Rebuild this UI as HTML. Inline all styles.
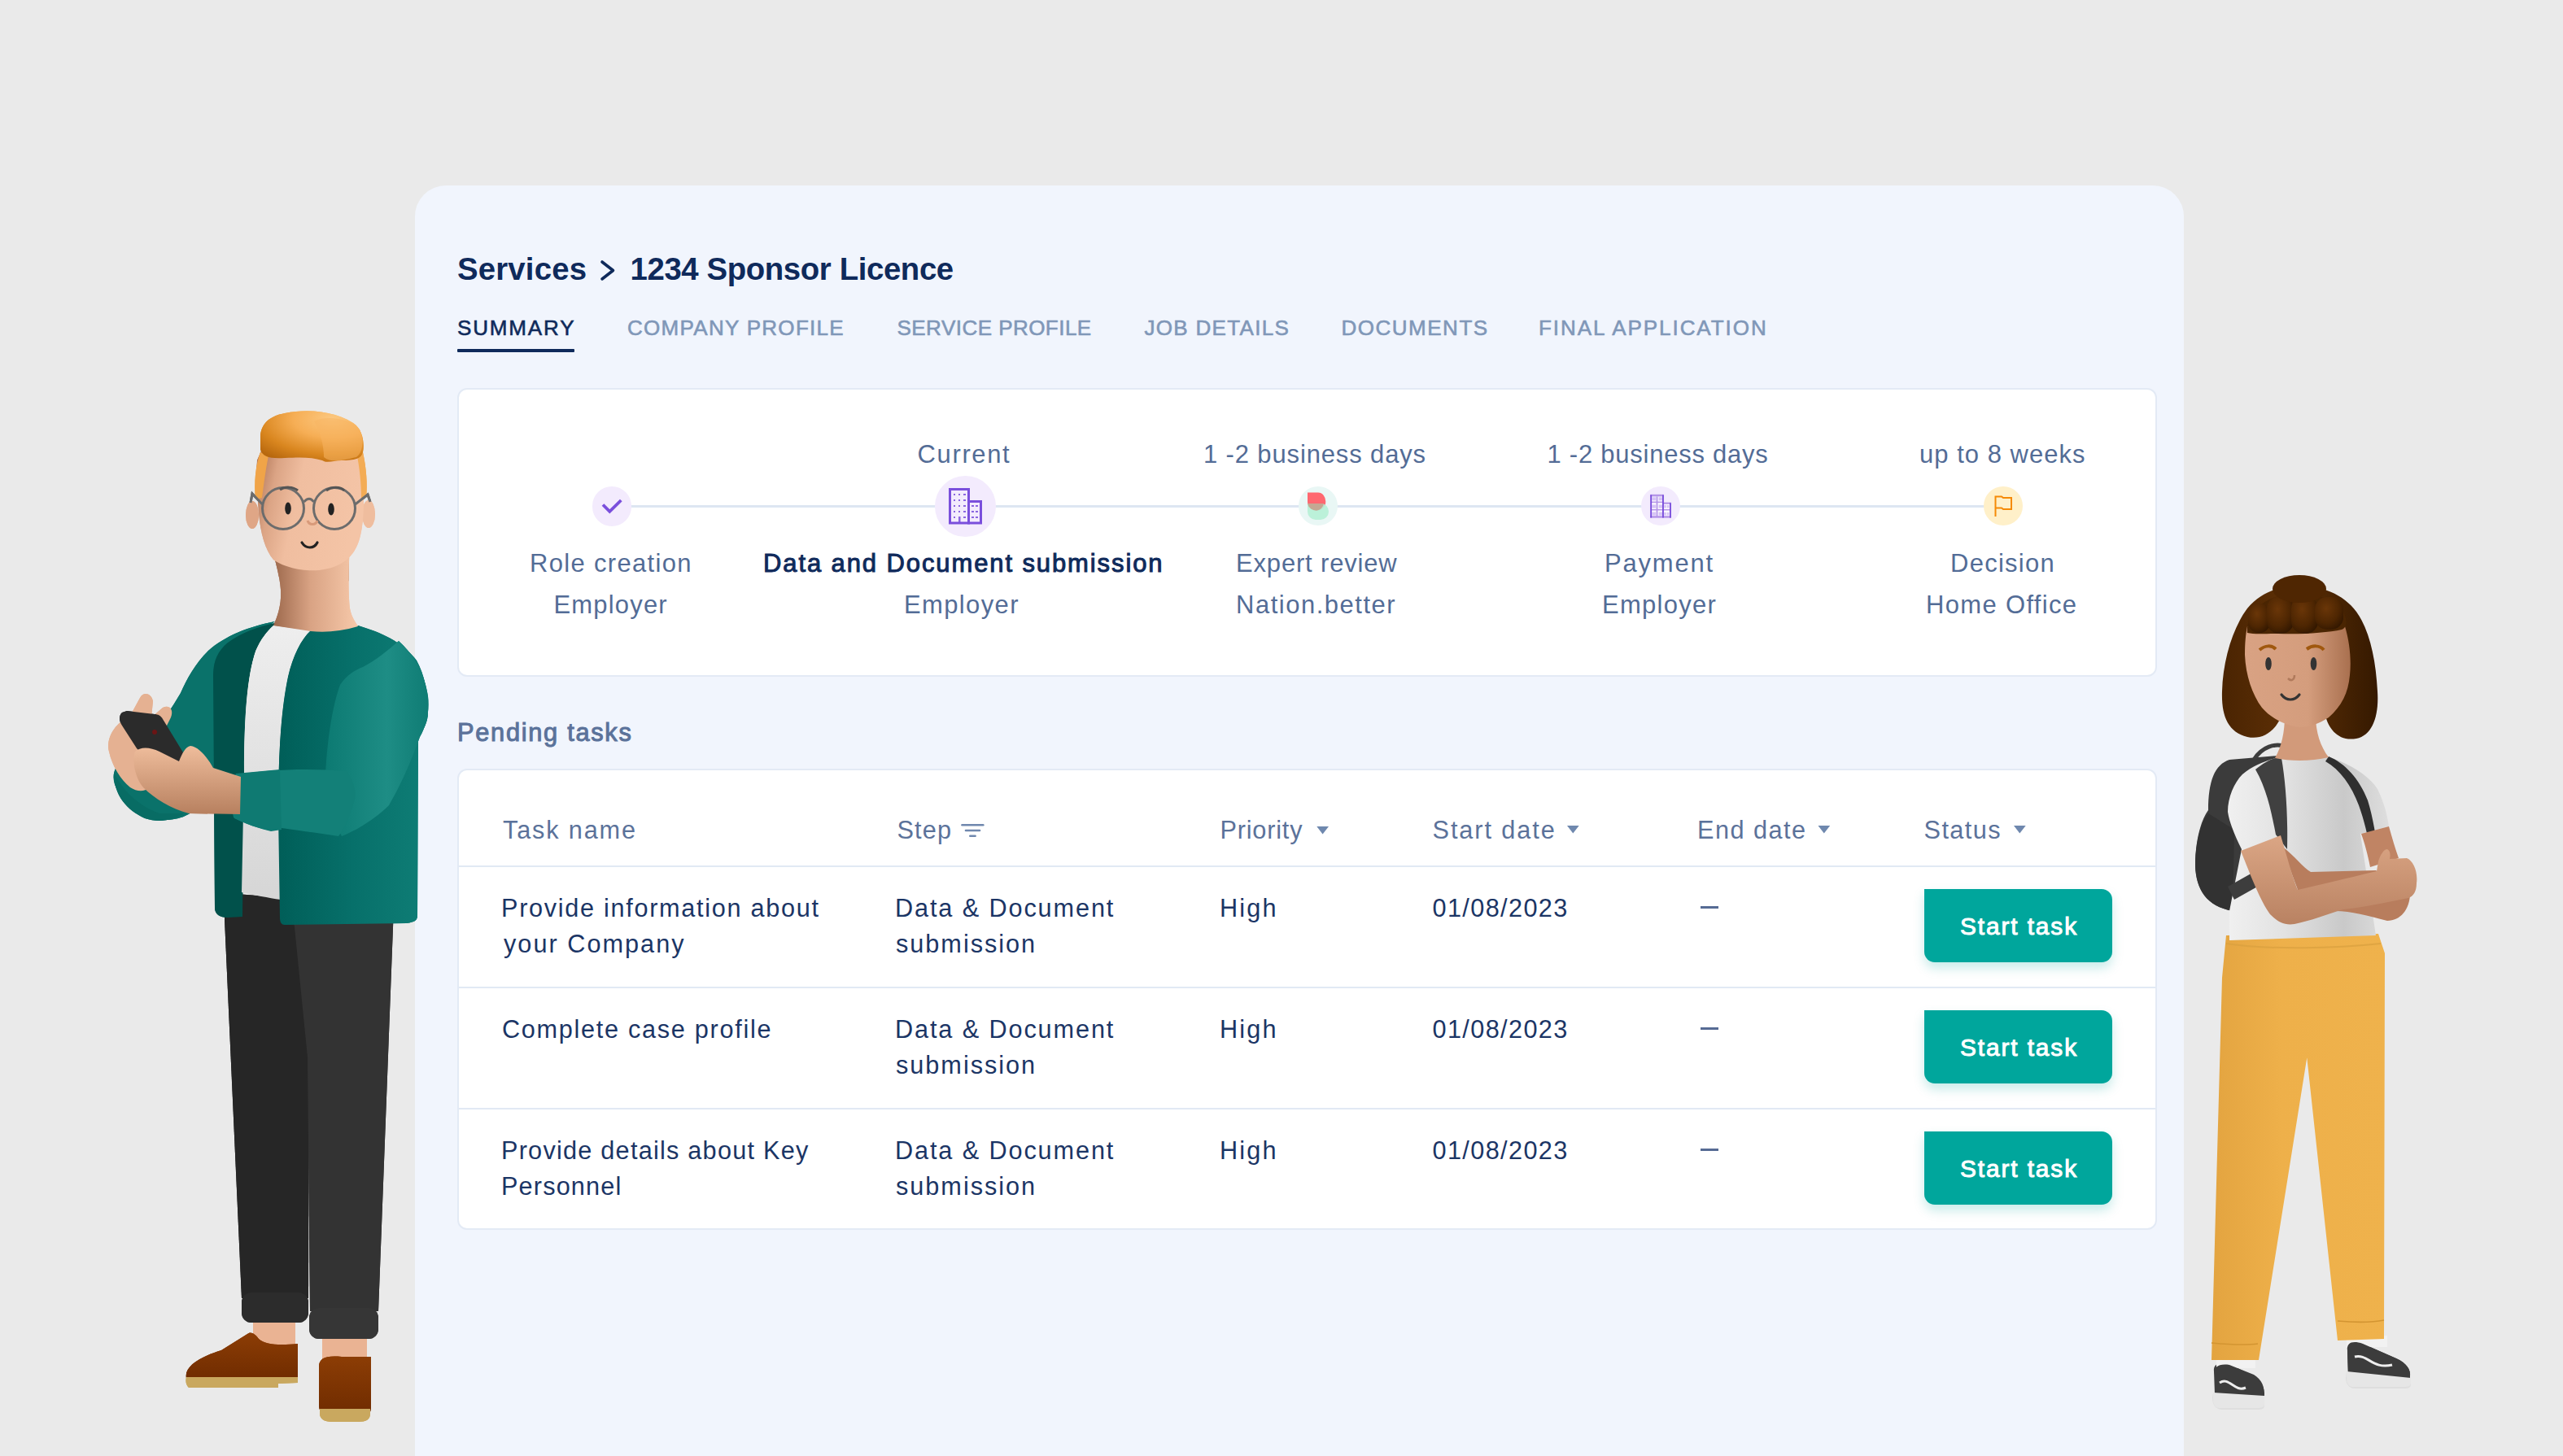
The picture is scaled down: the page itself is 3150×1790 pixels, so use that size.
<!DOCTYPE html>
<html><head><meta charset="utf-8"><title>Sponsor Licence</title><style>
*{margin:0;padding:0;box-sizing:border-box}
html,body{width:3150px;height:1790px;overflow:hidden}
body{position:relative;font-family:"Liberation Sans",sans-serif;background:#eaeaea}
.t{position:absolute;white-space:nowrap;line-height:1}

.card{position:absolute;left:510px;top:228px;width:2174px;height:1700px;background:#f1f5fd;border-radius:38px}
.box{position:absolute;background:#fff;border:2px solid #e3eaf5;border-radius:12px}
.hl{position:absolute;background:#e1e9f4}
.circ{position:absolute;border-radius:50%}
.btn{position:absolute;left:2365px;width:231px;height:89.5px;background:#00a69c;border-radius:0 13px 13px 13px;box-shadow:0 7px 14px rgba(0,166,156,0.22)}
.dash{position:absolute;left:2089.5px;width:22.5px;height:3px;background:#566b94}
.ic{position:absolute;overflow:visible}
</style></head><body>
<div class="card"></div>
<svg class="ic" style="left:0;top:0" width="3150" height="1790" viewBox="0 0 3150 1790">
  <polyline points="740,322 753.5,332.5 740,343" fill="none" stroke="#0f2a5b" stroke-width="3.6" stroke-linecap="round" stroke-linejoin="round"/>
</svg>
<div style="position:absolute;left:562px;top:428.8px;width:144px;height:3.8px;background:#0f2a5b;border-radius:1px"></div>
<div class="box" style="left:562.3px;top:477.2px;width:2088.7px;height:354.5px"></div>
<div class="box" style="left:562.3px;top:944.8px;width:2088.7px;height:567.4px"></div>
<div style="position:absolute;left:760px;top:620.5px;width:1700px;height:3.4px;background:#dde6f2"></div>
<div class="circ" style="left:727.8px;top:598.3px;width:48.6px;height:48.6px;background:#f3ebfd"></div>
<div class="circ" style="left:1149px;top:585px;width:74.5px;height:74.5px;background:#f3ebfd"></div>
<div class="circ" style="left:1596px;top:598px;width:48px;height:48px;background:#e9f7f5"></div>
<div class="circ" style="left:2017px;top:598px;width:48px;height:48px;background:#f3ebfd"></div>
<div class="circ" style="left:2438px;top:598px;width:48px;height:48px;background:#fff0c9"></div>
<svg class="ic" style="left:0;top:0" width="3150" height="1790" viewBox="0 0 3150 1790">
  <!-- check -->
  <polyline points="741,620.5 749.3,628.8 763.3,615" fill="none" stroke="#7a4fdc" stroke-width="3.8" stroke-linecap="butt" stroke-linejoin="miter"/>
  <!-- big building -->
  <g fill="none" stroke="#7a4fdc" stroke-width="3">
    <rect x="1167.5" y="601.5" width="23" height="41.5"/>
    <rect x="1190.5" y="616.5" width="15" height="26.5"/>
  </g>
  <g fill="#7a4fdc" opacity="0.85">
    <rect x="1172" y="607" width="2" height="2"/><rect x="1178" y="607" width="2" height="2"/><rect x="1184" y="607" width="3" height="2"/>
    <rect x="1172" y="614" width="2" height="2"/><rect x="1178" y="614" width="2" height="2"/><rect x="1184" y="614" width="3" height="2"/>
    <rect x="1172" y="621" width="2" height="2"/><rect x="1178" y="621" width="2" height="2"/><rect x="1184" y="621" width="3" height="2"/>
    <rect x="1172" y="628" width="2" height="2"/><rect x="1178" y="628" width="2" height="2"/><rect x="1184" y="628" width="3" height="2"/>
    <rect x="1172" y="635" width="2" height="2"/><rect x="1178" y="635" width="2.5" height="8"/><rect x="1184" y="635" width="3" height="2"/>
    <rect x="1194" y="621" width="3" height="2"/><rect x="1199" y="621" width="3" height="2"/>
    <rect x="1194" y="628" width="3" height="2"/><rect x="1199" y="628" width="3" height="2"/>
    <rect x="1194" y="635" width="3" height="2"/><rect x="1199" y="635" width="3" height="2"/>
  </g>
  <!-- expert review blob -->
  <path d="M1607,605.5 H1620 A9.3,11 0 0 1 1629.3,616.5 A11,11 0 0 1 1618,627.7 A11,11 0 0 1 1607,616.7 Z" fill="#ff6870"/>
  <path d="M1607,619 H1624 A9,10 0 0 1 1633,629 A10,10 0 0 1 1623,639 H1617 A10,10 0 0 1 1607,629 Z" fill="#b6efd6" opacity="0.9"/>
  <path d="M1607,619 H1627 A11,11 0 0 1 1618,627.7 A11,11 0 0 1 1607,619 Z" fill="#c4a893"/>
  <!-- payment building -->
  <rect x="2029.5" y="610" width="14" height="25" fill="#fbf8ff"/>
  <rect x="2044.5" y="619.5" width="8" height="15.5" fill="#fbf8ff"/>
  <g fill="#d6c4f5">
    <rect x="2030.3" y="611.3" width="4.8" height="4"/><rect x="2038.6" y="611.3" width="4.4" height="4"/>
    <rect x="2030.3" y="620.6" width="4.8" height="4"/><rect x="2038.6" y="620.6" width="4.4" height="4"/>
    <rect x="2030.3" y="629.6" width="4.8" height="4"/><rect x="2038.6" y="629.6" width="4.4" height="4"/>
    <rect x="2045.2" y="621" width="2.6" height="3.4"/><rect x="2048.8" y="621" width="2.6" height="3.4"/>
    <rect x="2045.2" y="630" width="2.6" height="3.4"/><rect x="2048.8" y="630" width="2.6" height="3.4"/>
  </g>
  <g fill="#b596e8">
    <rect x="2035.6" y="610.5" width="1.8" height="25"/>
    <rect x="2029.5" y="616.6" width="14" height="1.5"/><rect x="2029.5" y="626" width="24" height="1.5"/>
    <rect x="2028.2" y="607.8" width="16.6" height="2.6"/>
    <rect x="2028.2" y="634.2" width="25.6" height="2.5"/>
    <rect x="2044" y="617.6" width="9.8" height="2.2"/>
  </g>
  <g fill="#7a4fdc">
    <rect x="2028.2" y="608.5" width="1.9" height="28"/>
    <rect x="2043" y="608.5" width="1.9" height="28"/>
    <rect x="2052" y="618.3" width="1.9" height="18.3"/>
  </g>
  <!-- flag -->
  <path d="M2452.5,635 V610.5 H2460 L2462,612 H2472 V626 H2462 L2460,624.5 H2452.5" fill="none" stroke="#f58a07" stroke-width="2" stroke-linejoin="miter"/>
  <!-- filter icon -->
  <g stroke="#7088ae" stroke-width="2.6" stroke-linecap="round">
    <line x1="1182.5" y1="1014.3" x2="1208.3" y2="1014.3"/>
    <line x1="1187" y1="1021" x2="1204" y2="1021"/>
    <line x1="1192.3" y1="1027.8" x2="1198.6" y2="1027.8"/>
  </g>
  <g fill="#6f88ae">
    <path d="M1618.3,1016 H1633 L1625.6,1025.5 Z"/>
    <path d="M1926,1015 H1940.7 L1933.3,1024.5 Z"/>
    <path d="M2234.5,1015 H2249.2 L2241.8,1024.5 Z"/>
    <path d="M2475,1015 H2489.7 L2482.3,1024.5 Z"/>
  </g>
</svg>
<div class="hl" style="left:564px;top:1063.5px;width:2085px;height:2px"></div>
<div class="hl" style="left:564px;top:1212.6px;width:2085px;height:2px"></div>
<div class="hl" style="left:564px;top:1361.7px;width:2085px;height:2px"></div>
<div class="dash" style="top:1114.3px"></div>
<div class="dash" style="top:1263.3px"></div>
<div class="dash" style="top:1412.3px"></div>
<div class="btn" style="top:1093.2px"></div>
<div class="btn" style="top:1242.2px"></div>
<div class="btn" style="top:1391.2px"></div>

<div class="t" id="bc1" style="left:562.00px;top:311.61px;font-size:38.37px;letter-spacing:0.171px;font-weight:700;color:#0f2a5b">Services</div>
<div class="t" id="bc2" style="left:774.50px;top:311.61px;font-size:38.37px;letter-spacing:-0.389px;font-weight:700;color:#0f2a5b">1234 Sponsor Licence</div>
<div class="t" id="tab1" style="left:562.00px;top:389.81px;font-size:26.02px;letter-spacing:1.833px;font-weight:400;color:#0f2a5b;-webkit-text-stroke:0.60px #0f2a5b">SUMMARY</div>
<div class="t" id="tab2" style="left:771.00px;top:389.81px;font-size:26.02px;letter-spacing:1.286px;font-weight:400;color:#8097b8;-webkit-text-stroke:0.60px #8097b8">COMPANY PROFILE</div>
<div class="t" id="tab3" style="left:1102.50px;top:389.81px;font-size:26.02px;letter-spacing:0.457px;font-weight:400;color:#8097b8;-webkit-text-stroke:0.60px #8097b8">SERVICE PROFILE</div>
<div class="t" id="tab4" style="left:1406.50px;top:389.81px;font-size:26.02px;letter-spacing:1.300px;font-weight:400;color:#8097b8;-webkit-text-stroke:0.60px #8097b8">JOB DETAILS</div>
<div class="t" id="tab5" style="left:1648.50px;top:389.81px;font-size:26.02px;letter-spacing:1.500px;font-weight:400;color:#8097b8;-webkit-text-stroke:0.60px #8097b8">DOCUMENTS</div>
<div class="t" id="tab6" style="left:1891.00px;top:389.81px;font-size:26.02px;letter-spacing:1.938px;font-weight:400;color:#8097b8;-webkit-text-stroke:0.60px #8097b8">FINAL APPLICATION</div>
<div class="t" id="st1" style="left:1127.50px;top:543.60px;font-size:30.96px;letter-spacing:1.667px;font-weight:400;color:#536c96">Current</div>
<div class="t" id="st2" style="left:1479.00px;top:543.60px;font-size:30.96px;letter-spacing:0.882px;font-weight:400;color:#536c96">1 -2 business days</div>
<div class="t" id="st3" style="left:1901.50px;top:543.60px;font-size:30.96px;letter-spacing:0.776px;font-weight:400;color:#536c96">1 -2 business days</div>
<div class="t" id="st4" style="left:2359.00px;top:543.60px;font-size:30.96px;letter-spacing:1.033px;font-weight:400;color:#536c96">up to 8 weeks</div>
<div class="t" id="sr1" style="left:651.00px;top:677.60px;font-size:30.96px;letter-spacing:1.350px;font-weight:400;color:#536c96">Role creation</div>
<div class="t" id="sr2" style="left:938.00px;top:677.60px;font-size:30.96px;letter-spacing:1.919px;font-weight:400;color:#0f2a5b;-webkit-text-stroke:1.00px #0f2a5b">Data and Document submission</div>
<div class="t" id="sr3" style="left:1519.00px;top:677.60px;font-size:30.96px;letter-spacing:0.850px;font-weight:400;color:#536c96">Expert review</div>
<div class="t" id="sr4" style="left:1972.00px;top:677.60px;font-size:30.96px;letter-spacing:1.833px;font-weight:400;color:#536c96">Payment</div>
<div class="t" id="sr5" style="left:2397.00px;top:677.60px;font-size:30.96px;letter-spacing:1.286px;font-weight:400;color:#536c96">Decision</div>
<div class="t" id="ss1" style="left:680.50px;top:729.31px;font-size:30.96px;letter-spacing:1.200px;font-weight:400;color:#536c96">Employer</div>
<div class="t" id="ss2" style="left:1111.00px;top:729.31px;font-size:30.96px;letter-spacing:1.400px;font-weight:400;color:#536c96">Employer</div>
<div class="t" id="ss3" style="left:1519.00px;top:729.31px;font-size:30.96px;letter-spacing:1.533px;font-weight:400;color:#536c96">Nation.better</div>
<div class="t" id="ss4" style="left:1969.00px;top:729.31px;font-size:30.96px;letter-spacing:1.286px;font-weight:400;color:#536c96">Employer</div>
<div class="t" id="ss5" style="left:2367.00px;top:729.31px;font-size:30.96px;letter-spacing:1.360px;font-weight:400;color:#536c96">Home Office</div>
<div class="t" id="pt" style="left:562.00px;top:886.41px;font-size:30.81px;letter-spacing:1.700px;font-weight:400;color:#5b729a;-webkit-text-stroke:1.00px #5b729a">Pending tasks</div>
<div class="t" id="h1" style="left:618.00px;top:1004.50px;font-size:30.67px;letter-spacing:1.850px;font-weight:400;color:#5b729a">Task name</div>
<div class="t" id="h2" style="left:1102.50px;top:1004.50px;font-size:30.67px;letter-spacing:1.133px;font-weight:400;color:#5b729a">Step</div>
<div class="t" id="h3" style="left:1499.50px;top:1004.50px;font-size:30.67px;letter-spacing:0.800px;font-weight:400;color:#5b729a">Priority</div>
<div class="t" id="h4" style="left:1760.50px;top:1004.50px;font-size:30.67px;letter-spacing:1.933px;font-weight:400;color:#5b729a">Start date</div>
<div class="t" id="h5" style="left:2086.00px;top:1004.50px;font-size:30.67px;letter-spacing:1.457px;font-weight:400;color:#5b729a">End date</div>
<div class="t" id="h6" style="left:2364.50px;top:1004.50px;font-size:30.67px;letter-spacing:1.440px;font-weight:400;color:#5b729a">Status</div>
<div class="t" id="r0a" style="left:616.00px;top:1101.00px;font-size:30.67px;letter-spacing:1.692px;font-weight:400;color:#1b3565">Provide information about</div>
<div class="t" id="r0b" style="left:619.00px;top:1145.00px;font-size:30.67px;letter-spacing:2.018px;font-weight:400;color:#1b3565">your Company</div>
<div class="t" id="r0c" style="left:1100.00px;top:1101.00px;font-size:30.67px;letter-spacing:1.886px;font-weight:400;color:#1b3565">Data &amp; Document</div>
<div class="t" id="r0d" style="left:1101.00px;top:1145.00px;font-size:30.67px;letter-spacing:1.978px;font-weight:400;color:#1b3565">submission</div>
<div class="t" id="r0e" style="left:1499.00px;top:1101.00px;font-size:30.67px;letter-spacing:2.133px;font-weight:400;color:#1b3565">High</div>
<div class="t" id="r0f" style="left:1760.50px;top:1101.00px;font-size:30.67px;letter-spacing:1.378px;font-weight:400;color:#1b3565">01/08/2023</div>
<div class="t" id="r0g" style="left:2409.00px;top:1124.01px;font-size:29.80px;letter-spacing:1.911px;font-weight:400;color:#ffffff;-webkit-text-stroke:1.00px #ffffff">Start task</div>
<div class="t" id="r1a" style="left:617.00px;top:1250.00px;font-size:30.67px;letter-spacing:1.700px;font-weight:400;color:#1b3565">Complete case profile</div>
<div class="t" id="r1c" style="left:1100.00px;top:1250.00px;font-size:30.67px;letter-spacing:1.886px;font-weight:400;color:#1b3565">Data &amp; Document</div>
<div class="t" id="r1d" style="left:1101.00px;top:1294.00px;font-size:30.67px;letter-spacing:1.978px;font-weight:400;color:#1b3565">submission</div>
<div class="t" id="r1e" style="left:1499.00px;top:1250.00px;font-size:30.67px;letter-spacing:2.133px;font-weight:400;color:#1b3565">High</div>
<div class="t" id="r1f" style="left:1760.50px;top:1250.00px;font-size:30.67px;letter-spacing:1.378px;font-weight:400;color:#1b3565">01/08/2023</div>
<div class="t" id="r1g" style="left:2409.00px;top:1273.01px;font-size:29.80px;letter-spacing:1.911px;font-weight:400;color:#ffffff;-webkit-text-stroke:1.00px #ffffff">Start task</div>
<div class="t" id="r2a" style="left:616.00px;top:1399.00px;font-size:30.67px;letter-spacing:1.233px;font-weight:400;color:#1b3565">Provide details about Key</div>
<div class="t" id="r2b" style="left:616.00px;top:1443.00px;font-size:30.67px;letter-spacing:1.150px;font-weight:400;color:#1b3565">Personnel</div>
<div class="t" id="r2c" style="left:1100.00px;top:1399.00px;font-size:30.67px;letter-spacing:1.886px;font-weight:400;color:#1b3565">Data &amp; Document</div>
<div class="t" id="r2d" style="left:1101.00px;top:1443.00px;font-size:30.67px;letter-spacing:1.978px;font-weight:400;color:#1b3565">submission</div>
<div class="t" id="r2e" style="left:1499.00px;top:1399.00px;font-size:30.67px;letter-spacing:2.133px;font-weight:400;color:#1b3565">High</div>
<div class="t" id="r2f" style="left:1760.50px;top:1399.00px;font-size:30.67px;letter-spacing:1.378px;font-weight:400;color:#1b3565">01/08/2023</div>
<div class="t" id="r2g" style="left:2409.00px;top:1422.01px;font-size:29.80px;letter-spacing:1.911px;font-weight:400;color:#ffffff;-webkit-text-stroke:1.00px #ffffff">Start task</div>
<svg style="position:absolute;left:0;top:0" width="3150" height="1790" viewBox="0 0 3150 1790">
<defs>
  <linearGradient id="gPants" x1="0" y1="0" x2="1" y2="0">
    <stop offset="0" stop-color="#262626"/><stop offset="0.5" stop-color="#2e2e2e"/><stop offset="1" stop-color="#3a3a3a"/>
  </linearGradient>
  <linearGradient id="gNeck" x1="0" y1="0" x2="1" y2="0">
    <stop offset="0" stop-color="#9a664a"/><stop offset="0.45" stop-color="#d9a384"/><stop offset="1" stop-color="#f7c9aa"/>
  </linearGradient>
  <linearGradient id="gFace" x1="0" y1="0" x2="1" y2="0.25">
    <stop offset="0" stop-color="#a86c4e"/><stop offset="0.22" stop-color="#dba485"/><stop offset="0.45" stop-color="#f0bea0"/><stop offset="1" stop-color="#f4c4a6"/>
  </linearGradient>
  <radialGradient id="gHair" cx="0.7" cy="0.15" r="0.95">
    <stop offset="0" stop-color="#fcc880"/><stop offset="0.4" stop-color="#f6ae55"/><stop offset="0.75" stop-color="#d9861f"/><stop offset="1" stop-color="#b8680e"/>
  </radialGradient>
  <linearGradient id="gJR" x1="0" y1="0" x2="1" y2="0">
    <stop offset="0" stop-color="#005e58"/><stop offset="0.5" stop-color="#07706a"/><stop offset="1" stop-color="#0f7e76"/>
  </linearGradient>
  <linearGradient id="gArmR" x1="0" y1="0" x2="1" y2="0">
    <stop offset="0" stop-color="#0c7a72"/><stop offset="0.6" stop-color="#1e8d85"/><stop offset="1" stop-color="#0f7c74"/>
  </linearGradient>
  <linearGradient id="gShirt" x1="0" y1="0" x2="0" y2="1">
    <stop offset="0" stop-color="#eeeeee"/><stop offset="1" stop-color="#d6d6d6"/>
  </linearGradient>
  <linearGradient id="gShoe" x1="0" y1="0" x2="0" y2="1">
    <stop offset="0" stop-color="#8c3d05"/><stop offset="1" stop-color="#6e2b00"/>
  </linearGradient>
  <linearGradient id="gHand" x1="0" y1="0" x2="0" y2="1">
    <stop offset="0" stop-color="#efbd9c"/><stop offset="1" stop-color="#b7805f"/>
  </linearGradient>
  <linearGradient id="gYP" x1="0" y1="0" x2="1" y2="0">
    <stop offset="0" stop-color="#e3a440"/><stop offset="0.4" stop-color="#eeb04a"/><stop offset="1" stop-color="#efb24c"/>
  </linearGradient>
  <linearGradient id="gWHair" x1="0" y1="0" x2="1" y2="0">
    <stop offset="0" stop-color="#4a2402"/><stop offset="0.45" stop-color="#5e3006"/><stop offset="1" stop-color="#351900"/>
  </linearGradient>
  <linearGradient id="gWFace" x1="0" y1="0" x2="1" y2="0">
    <stop offset="0" stop-color="#d9a283"/><stop offset="0.6" stop-color="#d49d7d"/><stop offset="1" stop-color="#a9704f"/>
  </linearGradient>
  <linearGradient id="gTee" x1="0" y1="0" x2="1" y2="0">
    <stop offset="0" stop-color="#f0f0f0"/><stop offset="0.35" stop-color="#e2e2e2"/><stop offset="0.72" stop-color="#c9c9c9"/><stop offset="1" stop-color="#dedede"/>
  </linearGradient>
  <linearGradient id="gArmW" x1="0" y1="0" x2="0" y2="1">
    <stop offset="0" stop-color="#dba685"/><stop offset="1" stop-color="#b98262"/>
  </linearGradient>
  <radialGradient id="gBang" cx="0.4" cy="0.35" r="0.75">
    <stop offset="0" stop-color="#6a3608"/><stop offset="0.6" stop-color="#4e2602"/><stop offset="1" stop-color="#2e1500"/>
  </radialGradient>
</defs>

<!-- ============ LEFT MAN ============ -->
<g id="man">
  <!-- ankles -->
  <path d="M311,1618 H363 V1660 H311 Z" fill="#eab393"/>
  <path d="M396,1638 H451 V1676 H396 Z" fill="#eab393"/>
  <!-- pants -->
  <path d="M277,1098 L356,1104 L380,1140 L379,1596 L297,1596 L276,1130 Z" fill="#262626"/>
  <path d="M356,1104 L484,1112 L483,1140 L465,1612 L381,1612 L378,1300 L362,1140 Z" fill="#333333"/>
  <rect x="297" y="1589" width="82" height="37" rx="12" fill="#2c2c2c"/>
  <rect x="380" y="1608" width="85" height="38" rx="12" fill="#363636"/>
  <!-- left shoe -->
  <path d="M229,1694 C226,1680 246,1668 272,1660 L304,1640 C308,1636 314,1640 318,1646 C326,1654 346,1654 366,1652 L366,1699 L229,1698 Z" fill="url(#gShoe)"/>
  <path d="M229,1693 H366 V1700 L342,1701 V1706 H232 C228,1702 228,1697 229,1693 Z" fill="#c9a85f"/>
  <!-- right shoe -->
  <path d="M392,1680 C392,1670 400,1666 420,1668 L456,1668 L456,1730 C456,1738 452,1742 440,1742 H408 C398,1742 392,1736 392,1728 Z" fill="url(#gShoe)"/>
  <path d="M393,1732 H455 V1738 C455,1745 450,1748 440,1748 H408 C398,1748 393,1744 393,1738 Z" fill="#c9a85f"/>

  <!-- left sleeve (image left) -->
  <path d="M338,764 C306,770 276,782 256,800 C240,816 230,834 222,852 C200,890 176,918 150,936 C138,944 136,960 146,974 C158,992 178,1006 204,1008 C226,1008 246,996 262,972 L270,860 L300,790 Z" fill="#0a726a"/>
  <!-- left panel dark -->
  <path d="M338,766 C318,770 296,778 280,790 C268,800 262,812 262,830 L264,1116 C264,1124 270,1128 280,1128 L298,1127 L300,950 C300,880 304,830 314,800 C320,786 328,775 338,768 Z" fill="#01514b"/>
  <!-- white shirt -->
  <path d="M336,769 L382,775 C370,786 360,806 354,832 C346,870 342,920 342,980 L345,1106 C330,1104 312,1100 297,1097 L300,950 C300,880 304,830 314,802 C320,788 328,776 336,769 Z" fill="url(#gShirt)"/>
  <!-- right panel -->
  <path d="M382,775 L440,769 C470,778 496,790 512,812 C522,830 526,852 526,876 C526,888 520,898 514,906 L513,1126 C513,1132 508,1134 500,1135 L350,1137 C346,1137 344,1134 344,1128 L342,1000 C342,920 346,870 354,832 C360,806 370,786 382,775 Z" fill="url(#gJR)"/>
  <!-- right upper arm -->
  <path d="M490,788 C508,804 522,828 526,856 C528,876 524,892 516,906 C506,934 494,962 478,990 C462,1006 440,1020 420,1028 L400,990 C398,950 404,880 418,842 C426,830 436,824 446,820 C462,812 476,800 490,788 Z" fill="url(#gArmR)"/>
  <!-- forearm -->
  <path d="M292,952 C330,946 380,944 426,948 C434,960 438,972 436,982 C430,1004 424,1018 416,1028 C390,1024 360,1020 340,1017 L332,1021 C316,1018 300,1012 288,1006 C284,990 284,966 292,952 Z" fill="#138078"/>
  <path d="M290,951 L344,946 L346,1020 L333,1022 C316,1018 300,1012 287,1005 C283,988 283,964 290,951 Z" fill="#0f7a72"/>

  <!-- back hand (behind phone) -->
  <path d="M134,924 C130,908 140,890 160,880 L172,858 C176,850 186,852 188,862 L186,882 L200,870 C208,866 214,872 210,882 L196,910 L190,960 C186,972 172,976 160,968 C148,958 138,942 134,924 Z" fill="#e5b192"/>
  <!-- phone -->
  <path d="M150,876 C146,880 146,886 150,892 L168,920 C170,923 174,924 178,924 L222,940 C228,942 230,936 228,930 L200,884 C198,880 194,878 190,878 L156,874 Z" fill="#2b2b2b"/>
  <circle cx="190" cy="900" r="3" fill="#6a1515"/>
  <!-- front hand -->
  <path d="M166,924 C172,918 184,918 196,924 L220,936 C224,926 228,918 234,917 C244,918 254,930 262,944 L296,955 L295,1001 L232,1000 C210,994 190,982 176,968 C166,956 162,936 166,924 Z" fill="url(#gHand)"/>
  <!-- cuff on left sleeve under hand -->
  <path d="M140,950 C150,970 168,990 196,1000 L226,1000 C214,1008 196,1012 178,1006 C156,996 140,978 140,950 Z" fill="#086c64"/>

  <!-- neck -->
  <path d="M334,672 L430,672 C428,700 428,730 430,748 C432,758 436,764 440,770 C420,776 400,778 382,776 L336,769 C342,756 346,742 345,725 C344,708 338,690 334,672 Z" fill="url(#gNeck)"/>
  <!-- ears -->
  <ellipse cx="310" cy="633" rx="8" ry="17" fill="#dfa686"/>
  <ellipse cx="453" cy="632" rx="8" ry="17" fill="#efbd9e"/>
  <!-- face -->
  <path d="M324,548 L440,548 C450,600 448,640 442,662 C436,684 420,698 392,701 C370,703 346,696 336,688 C326,676 320,656 318,630 C316,604 315,584 316,566 Z" fill="url(#gFace)"/>
  <path d="M341,694 C352,700 372,704 392,702 C410,700 422,694 429,686 L429,714 C418,722 404,726 388,726 C368,726 352,718 342,708 Z" fill="#a8704f" opacity="0.45"/>
  <!-- side hair -->
  <path d="M320,556 L330,560 C326,580 324,598 322,612 L314,614 C312,594 314,572 320,556 Z" fill="#f0a448"/>
  <path d="M438,556 L446,556 C450,574 452,596 450,612 L444,612 C444,596 442,574 438,556 Z" fill="#f3ac55"/>
  <!-- hair top -->
  <path d="M320,538 C320,524 328,512 350,508 C380,502 412,506 434,520 C446,528 448,544 446,556 C444,564 436,566 420,566 C410,566 402,570 396,566 C384,562 370,562 350,563 C332,564 322,562 320,552 Z" fill="url(#gHair)"/>
  <path d="M386,518 C400,510 430,514 442,528 C448,542 446,556 438,562 C420,566 408,570 398,562 C398,548 394,532 386,518 Z" fill="#f7b462" opacity="0.55"/>
  <!-- glasses -->
  <g fill="none" stroke="#6c6c6c" stroke-width="3">
    <circle cx="348" cy="625" r="25.5"/>
    <circle cx="411" cy="625" r="25.5"/>
    <path d="M373.5,617 C378,612 382,612 385.5,617"/>
    <path d="M322.5,620 L310,607 L308,618"/>
    <path d="M436.5,620 L452,608 L455,617"/>
  </g>
  <ellipse cx="354" cy="625" rx="3.8" ry="7.5" fill="#222"/>
  <ellipse cx="407" cy="626" rx="3.8" ry="7.5" fill="#222"/>
  <path d="M344,602 C350,598 360,598 366,603" stroke="#555" stroke-width="3" fill="none"/>
  <path d="M401,603 C408,598 418,598 423,603" stroke="#555" stroke-width="3" fill="none"/>
  <path d="M378,640 C380,646 388,646 390,640" stroke="#d89a7a" stroke-width="3" fill="none"/>
  <path d="M371,667 C376,675 386,675 390,667" stroke="#222" stroke-width="3.2" fill="none" stroke-linecap="round"/>
</g>

<!-- ============ RIGHT WOMAN ============ -->
<g id="woman">
  <!-- shoes -->
  <rect x="2724" y="1668" width="48" height="14" fill="#f2f2f2"/>
  <rect x="2884" y="1642" width="50" height="14" fill="#f2f2f2"/>
  <path d="M2720,1712 L2783,1722 V1728 C2783,1732 2780,1733 2774,1733 H2730 C2722,1732 2719,1726 2719,1718 Z" fill="#dedede"/>
  <path d="M2721,1686 C2720,1678 2726,1674 2738,1676 L2766,1690 C2778,1696 2784,1706 2783,1716 L2783,1722 L2722,1714 Z" fill="#3e3e3e"/>
  <path d="M2884,1686 L2963,1696 V1702 C2963,1706 2960,1707 2954,1707 H2894 C2886,1707 2883,1700 2883,1694 Z" fill="#dedede"/>
  <path d="M2885,1660 C2884,1650 2892,1648 2904,1652 L2945,1670 C2958,1676 2963,1684 2962,1692 V1696 L2886,1688 Z" fill="#3e3e3e"/>
  <path d="M2726,1696 C2736,1690 2744,1706 2756,1704" stroke="#eee" stroke-width="3" fill="none"/>
  <path d="M2890,1668 C2906,1662 2914,1680 2936,1676" stroke="#eee" stroke-width="3" fill="none"/>
  <!-- pants -->
  <path d="M277,1098 L356,1104 L380,1140 L379,1596 L297,1596 L276,1130 Z" fill="#262626"/>
  <path d="M356,1104 L484,1112 L483,1140 L465,1612 L381,1612 L378,1300 L362,1140 Z" fill="#333333"/>
  <rect x="297" y="1589" width="82" height="37" rx="12" fill="#2c2c2c"/>
  <rect x="380" y="1608" width="85" height="38" rx="12" fill="#363636"/>
  <!-- left shoe -->
  <path d="M229,1694 C226,1680 246,1668 272,1660 L304,1640 C308,1636 314,1640 318,1646 C326,1654 346,1654 366,1652 L366,1699 L229,1698 Z" fill="url(#gShoe)"/>
  <path d="M229,1693 H366 V1700 L342,1701 V1706 H232 C228,1702 228,1697 229,1693 Z" fill="#c9a85f"/>
  <!-- right shoe -->
  <path d="M392,1680 C392,1670 400,1666 420,1668 L456,1668 L456,1730 C456,1738 452,1742 440,1742 H408 C398,1742 392,1736 392,1728 Z" fill="url(#gShoe)"/>
  <path d="M393,1732 H455 V1738 C455,1745 450,1748 440,1748 H408 C398,1748 393,1744 393,1738 Z" fill="#c9a85f"/>

  <!-- left sleeve (image left) -->
  <path d="M338,764 C306,770 276,782 256,800 C240,816 230,834 222,852 C200,890 176,918 150,936 C138,944 136,960 146,974 C158,992 178,1006 204,1008 C226,1008 246,996 262,972 L270,860 L300,790 Z" fill="#0a726a"/>
  <!-- left panel dark -->
  <path d="M338,766 C318,770 296,778 280,790 C268,800 262,812 262,830 L264,1116 C264,1124 270,1128 280,1128 L298,1127 L300,950 C300,880 304,830 314,800 C320,786 328,775 338,768 Z" fill="#01514b"/>
  <!-- white shirt -->
  <path d="M336,769 L382,775 C370,786 360,806 354,832 C346,870 342,920 342,980 L345,1106 C330,1104 312,1100 297,1097 L300,950 C300,880 304,830 314,802 C320,788 328,776 336,769 Z" fill="url(#gShirt)"/>
  <!-- right panel -->
  <path d="M382,775 L440,769 C470,778 496,790 512,812 C522,830 526,852 526,876 C526,888 520,898 514,906 L513,1126 C513,1132 508,1134 500,1135 L350,1137 C346,1137 344,1134 344,1128 L342,1000 C342,920 346,870 354,832 C360,806 370,786 382,775 Z" fill="url(#gJR)"/>
  <!-- right upper arm -->
  <path d="M490,788 C508,804 522,828 526,856 C528,876 524,892 516,906 C506,934 494,962 478,990 C462,1006 440,1020 420,1028 L400,990 C398,950 404,880 418,842 C426,830 436,824 446,820 C462,812 476,800 490,788 Z" fill="url(#gArmR)"/>
  <!-- forearm -->
  <path d="M292,952 C330,946 380,944 426,948 C434,960 438,972 436,982 C430,1004 424,1018 416,1028 C390,1024 360,1020 340,1017 L332,1021 C316,1018 300,1012 288,1006 C284,990 284,966 292,952 Z" fill="#138078"/>
  <path d="M290,951 L344,946 L346,1020 L333,1022 C316,1018 300,1012 287,1005 C283,988 283,964 290,951 Z" fill="#0f7a72"/>

  <!-- back hand (behind phone) -->
  <path d="M134,924 C130,908 140,890 160,880 L172,858 C176,850 186,852 188,862 L186,882 L200,870 C208,866 214,872 210,882 L196,910 L190,960 C186,972 172,976 160,968 C148,958 138,942 134,924 Z" fill="#e5b192"/>
  <!-- phone -->
  <path d="M150,876 C146,880 146,886 150,892 L168,920 C170,923 174,924 178,924 L222,940 C228,942 230,936 228,930 L200,884 C198,880 194,878 190,878 L156,874 Z" fill="#2b2b2b"/>
  <circle cx="190" cy="900" r="3" fill="#6a1515"/>
  <!-- front hand -->
  <path d="M166,924 C172,918 184,918 196,924 L220,936 C224,926 228,918 234,917 C244,918 254,930 262,944 L296,955 L295,1001 L232,1000 C210,994 190,982 176,968 C166,956 162,936 166,924 Z" fill="url(#gHand)"/>
  <!-- cuff on left sleeve under hand -->
  <path d="M140,950 C150,970 168,990 196,1000 L226,1000 C214,1008 196,1012 178,1006 C156,996 140,978 140,950 Z" fill="#086c64"/>

  <!-- neck -->
  <path d="M334,672 L430,672 C428,700 428,730 430,748 C432,758 436,764 440,770 C420,776 400,778 382,776 L336,769 C342,756 346,742 345,725 C344,708 338,690 334,672 Z" fill="url(#gNeck)"/>
  <!-- ears -->
  <ellipse cx="310" cy="633" rx="8" ry="17" fill="#dfa686"/>
  <ellipse cx="453" cy="632" rx="8" ry="17" fill="#efbd9e"/>
  <!-- face -->
  <path d="M324,548 L440,548 C450,600 448,640 442,662 C436,684 420,698 392,701 C370,703 346,696 336,688 C326,676 320,656 318,630 C316,604 315,584 316,566 Z" fill="url(#gFace)"/>
  <!-- side hair -->
  <path d="M320,556 L330,560 C326,580 324,598 322,612 L314,614 C312,594 314,572 320,556 Z" fill="#f0a448"/>
  <path d="M438,556 L446,556 C450,574 452,596 450,612 L444,612 C444,596 442,574 438,556 Z" fill="#f3ac55"/>
  <!-- hair top -->
  <path d="M320,538 C320,524 328,512 350,508 C380,502 412,506 434,520 C446,528 448,544 446,556 C444,564 436,566 420,566 C410,566 402,570 396,566 C384,562 370,562 350,563 C332,564 322,562 320,552 Z" fill="url(#gHair)"/>
  <path d="M386,518 C400,510 430,514 442,528 C448,542 446,556 438,562 C420,566 408,570 398,562 C398,548 394,532 386,518 Z" fill="#f7b462" opacity="0.55"/>
  <!-- glasses -->
  <g fill="none" stroke="#6c6c6c" stroke-width="3">
    <circle cx="348" cy="625" r="25.5"/>
    <circle cx="411" cy="625" r="25.5"/>
    <path d="M373.5,617 C378,612 382,612 385.5,617"/>
    <path d="M322.5,620 L310,607 L308,618"/>
    <path d="M436.5,620 L452,608 L455,617"/>
  </g>
  <ellipse cx="354" cy="625" rx="3.8" ry="7.5" fill="#222"/>
  <ellipse cx="407" cy="626" rx="3.8" ry="7.5" fill="#222"/>
  <path d="M344,602 C350,598 360,598 366,603" stroke="#555" stroke-width="3" fill="none"/>
  <path d="M401,603 C408,598 418,598 423,603" stroke="#555" stroke-width="3" fill="none"/>
  <path d="M378,640 C380,646 388,646 390,640" stroke="#d89a7a" stroke-width="3" fill="none"/>
  <path d="M371,667 C376,675 386,675 390,667" stroke="#222" stroke-width="3.2" fill="none" stroke-linecap="round"/>
</g>

<!-- ============ RIGHT WOMAN ============ -->
<g id="woman">
  <!-- shoes -->
  <rect x="2724" y="1668" width="46" height="14" fill="#f2f2f2"/>
  <rect x="2884" y="1642" width="50" height="14" fill="#f2f2f2"/>
  <path d="M2722,1690 C2720,1680 2728,1676 2740,1678 L2770,1690 C2780,1696 2784,1706 2782,1716 L2782,1724 H2722 Z" fill="#3c3c3c"/>
  <path d="M2720,1712 L2783,1716 V1726 C2783,1730 2780,1731 2774,1731 H2728 C2722,1731 2720,1726 2720,1720 Z" fill="#e6e6e6"/>
  <path d="M2885,1660 C2884,1650 2892,1648 2904,1652 L2945,1670 C2958,1676 2963,1684 2962,1692 V1696 H2886 Z" fill="#3c3c3c"/>
  <path d="M2884,1686 L2963,1694 V1700 C2963,1704 2960,1705 2954,1705 H2892 C2886,1705 2884,1700 2884,1694 Z" fill="#e6e6e6"/>
  <path d="M2728,1700 C2740,1692 2746,1712 2760,1706" stroke="#eee" stroke-width="3" fill="none"/>
  <path d="M2894,1668 C2910,1664 2916,1684 2940,1678" stroke="#eee" stroke-width="3" fill="none"/>
  <!-- pants -->
  <path d="M2736,1150 L2923,1148 L2931,1172 L2930,1646 L2873,1648 L2832,1270 L2850,1208 L2776,1672 L2718,1672 L2731,1202 Z" fill="url(#gYP)"/>
  <path d="M2718,1651 C2740,1653 2760,1654 2775,1652" stroke="#d39532" stroke-width="1.6" fill="none"/>
  <path d="M2873,1624 C2895,1626 2915,1626 2930,1623" stroke="#d39532" stroke-width="1.6" fill="none"/>
  <path d="M2736,1160 C2790,1168 2870,1166 2926,1160" stroke="#d9a03e" stroke-width="2" fill="none" opacity="0.7"/>
  
  <!-- backpack -->
  <path d="M2740,934 C2722,940 2714,960 2714,996 C2704,1010 2698,1036 2698,1064 C2699,1094 2712,1114 2744,1120 L2770,1074 L2770,960 L2800,929 Z" fill="#3b3b3b"/>
  <path d="M2714,1000 C2704,1012 2698,1038 2698,1064 C2699,1094 2712,1114 2744,1120 L2746,1020 Z" fill="#323232"/>
  <path d="M2770,934 C2780,918 2796,913 2810,918" fill="none" stroke="#3d3d3d" stroke-width="5"/>
  <!-- t-shirt -->
  <path d="M2797,932 L2861,930 C2890,940 2912,954 2922,970 C2930,986 2934,1002 2936,1016 L2901,1025 L2920,1150 L2740,1156 L2740,1120 L2755,1044 C2748,1030 2740,1012 2738,998 C2738,980 2746,962 2756,952 C2768,942 2782,936 2797,932 Z" fill="url(#gTee)"/>
  <!-- straps -->
  <path d="M2772,946 C2784,936 2796,930 2804,932 C2809,960 2812,1000 2811,1044 L2797,1026 C2792,1000 2786,970 2772,946 Z" fill="#404040"/>
  <path d="M2738,1090 L2770,1072 L2778,1088 L2746,1106 Z" fill="#3d3d3d"/>
  <path d="M2862,930 C2882,938 2900,958 2910,984 C2918,1010 2922,1040 2923,1060 L2916,1062 C2913,1040 2907,1012 2899,990 C2890,966 2876,946 2858,936 Z" fill="#2f2f2f"/>
  <!-- arms crossed -->
  <path d="M2902,1025 L2936,1016 C2940,1030 2944,1044 2948,1055 L2913,1066 C2910,1050 2906,1036 2902,1025 Z" fill="#c08464"/>
  <path d="M2804,1040 C2820,1052 2830,1066 2840,1072 L2920,1070 L2962,1098 C2962,1118 2950,1132 2934,1132 C2910,1126 2890,1120 2870,1120 L2830,1110 Z" fill="#b87d5d"/>
  <path d="M2754,1046 L2803,1027 C2810,1050 2818,1080 2824,1094 C2850,1088 2880,1081 2921,1071 L2923,1059 C2926,1050 2930,1044 2934,1044 C2938,1046 2938,1052 2937,1056 L2958,1055 C2966,1058 2972,1072 2970,1086 C2970,1096 2966,1102 2960,1104 L2940,1108 C2920,1112 2900,1116 2880,1118 C2860,1124 2840,1132 2820,1136 C2806,1138 2798,1132 2790,1124 C2778,1108 2766,1076 2754,1046 Z" fill="url(#gArmW)"/>
  <!-- neck -->
  <path d="M2808,880 L2846,880 C2846,900 2852,918 2862,931 C2840,936 2816,936 2796,932 C2804,918 2808,900 2808,880 Z" fill="#d29a7a"/>
  <!-- hair back -->
  <path d="M2762,748 C2780,726 2806,720 2826,720 C2852,720 2880,730 2896,752 C2912,774 2920,810 2922,850 C2924,880 2916,904 2896,908 C2874,912 2862,896 2858,880 L2804,880 C2796,900 2780,910 2762,906 C2738,900 2730,880 2731,850 C2732,812 2744,772 2762,748 Z" fill="url(#gWHair)"/>
  <!-- face -->
  <path d="M2762,770 L2882,770 C2888,790 2890,812 2888,830 C2886,852 2878,868 2862,882 C2850,890 2838,894 2826,894 C2810,892 2792,884 2780,870 C2768,854 2760,830 2759,805 C2759,790 2760,780 2762,770 Z" fill="url(#gWFace)"/>
  <!-- bangs -->
  <path d="M2762,778 C2760,758 2776,736 2810,731 C2840,727 2872,736 2880,752 C2886,764 2884,772 2878,774 C2860,778 2830,780 2800,779 C2782,779 2770,780 2762,778 Z" fill="#4a2502"/>
  <rect x="2763" y="742" width="27" height="36" rx="13" fill="url(#gBang)"/>
  <rect x="2786" y="733" width="33" height="46" rx="15" fill="url(#gBang)"/>
  <rect x="2816" y="733" width="33" height="46" rx="15" fill="url(#gBang)"/>
  <rect x="2845" y="734" width="35" height="40" rx="15" fill="url(#gBang)"/>
  <!-- bun -->
  <ellipse cx="2826" cy="724" rx="33" ry="17" fill="#4f2602"/>
  <!-- features -->
  <path d="M2777,799 C2784,793 2792,793 2797,798" stroke="#a0580e" stroke-width="4" fill="none"/>
  <path d="M2835,798 C2842,793 2851,793 2856,799" stroke="#a0580e" stroke-width="4" fill="none"/>
  <ellipse cx="2788" cy="816" rx="3.8" ry="8" fill="#333"/>
  <ellipse cx="2843.5" cy="816" rx="3.8" ry="8" fill="#333"/>
  <path d="M2804,854 C2810,862 2820,862 2826,854" stroke="#333" stroke-width="3.2" fill="none" stroke-linecap="round"/>
  <path d="M2812,834 C2816,838 2820,836 2820,830" stroke="#b07a5c" stroke-width="2.5" fill="none"/>
</g>
</svg>

</body></html>
